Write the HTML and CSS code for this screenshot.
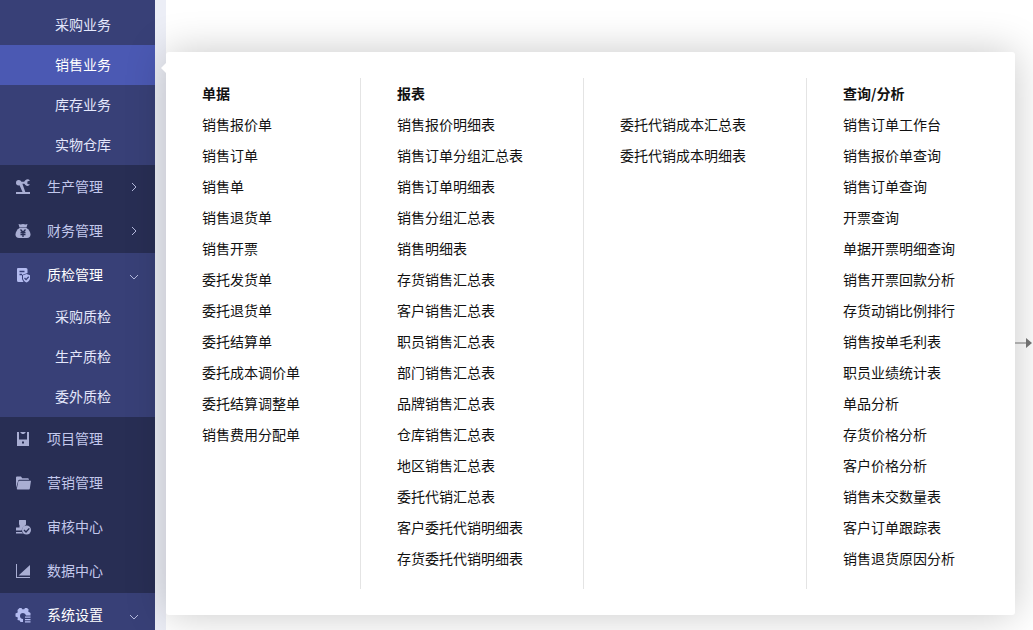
FILE: index.html
```html
<!DOCTYPE html>
<html lang="zh-CN">
<head>
<meta charset="utf-8">
<meta name="viewport" content="width=device-width, initial-scale=1">
<title>销售业务</title>
<link rel="stylesheet" href="styles.css">
</head>
<body>
<div class="app">
  <nav class="sidebar" aria-label="主导航">
    <div class="submenu submenu-top">
      <a class="sub-item" href="#">采购业务</a>
      <a class="sub-item active" href="#">销售业务</a>
      <a class="sub-item" href="#">库存业务</a>
      <a class="sub-item" href="#">实物仓库</a>
    </div>
    <button class="item" type="button">
      <svg class="icon" viewBox="0 0 16 16"><path d="M1 13h14v2H1z"/><circle cx="3.700" cy="3.700" r="2.700"/><path d="M4 2.700h6.500v2H7.400l3 8.500H7.600L4 5z"/><path d="M15 1.600A3.200 3.200 0 1 0 15 5.600l-2.600-.7V2.400z"/></svg>
      <span class="label">生产管理</span>
      <svg class="chevron" viewBox="0 0 10 10"><path d="M3 1l4 4-4 4"/></svg>
    </button>
    <button class="item" type="button">
      <svg class="icon" viewBox="0 0 16 16"><path d="M3.500 1l2 .5L8 1l2.500.5 2-.5-1 3.500h-7z"/><path d="M4.500 5h7C14 6.500 15.500 9 15.500 11.500c0 2.300-1.200 3.500-3.500 3.500H4C1.700 15 .5 13.800.5 11.500.5 9 2 6.500 4.500 5z"/><path class="cut" d="M5.500 6.500L8 9.200l2.500-2.700M5.500 9.500h5M5.500 11.500h5M8 9v5"/></svg>
      <span class="label">财务管理</span>
      <svg class="chevron" viewBox="0 0 10 10"><path d="M3 1l4 4-4 4"/></svg>
    </button>
    <div class="group">
      <button class="item" type="button">
        <svg class="icon" viewBox="0 0 16 16"><path d="M3 1h8q1.500 0 1.500 1.500V6L7 8v4l1.500 3H3.500q-1.500 0-1.500-1.500V2q0-1 1-1z"/><path class="cut" d="M4.500 4.500h5M4.500 7.500H7"/><path d="M11.500 7l3.500 1.300v3c0 2-1.500 3.300-3.500 4.200-2-.9-3.500-2.200-3.500-4.200v-3z"/><path class="cut" d="M9.500 11l1.600 1.600 2.600-2.800"/></svg>
        <span class="label">质检管理</span>
        <svg class="chevron low" viewBox="0 0 10 10"><path d="M1 3l4 4 4-4"/></svg>
      </button>
      <div class="submenu">
        <a class="sub-item" href="#">采购质检</a>
        <a class="sub-item" href="#">生产质检</a>
        <a class="sub-item" href="#">委外质检</a>
      </div>
    </div>
    <button class="item" type="button">
      <svg class="icon" viewBox="0 0 16 16"><path fill-rule="evenodd" d="M2 1h2v7.500h8V1h2v14H2zM7 10.500v2h2v-2z"/><path d="M5.500 1h5v1h-1v1h-3V2h-1z"/></svg>
      <span class="label">项目管理</span>
    </button>
    <button class="item" type="button">
      <svg class="icon" viewBox="0 0 16 16"><path d="M1 13V2.500Q1 1.500 2 1.500h4l1.200 1.700H13Q14 3.200 14 4.700H4.500q-1 0-1.300 1z"/><path d="M4.500 5.700H16l-1.200 8q-.1.800-.8.800H2.500q-.8 0-.7-.7l1.500-7.200q.2-.9 1.200-.9z"/></svg>
      <span class="label">营销管理</span>
    </button>
    <button class="item" type="button">
      <svg class="icon" viewBox="0 0 16 16"><path d="M4 1.500Q4 1 4.500 1h6q.5 0 .5.500v4L9.500 7Q7 8.500 6.500 11.500H1V8.500h3.500V6L4 5.500zM1 13h6l1 1.500H1z"/><circle cx="11.500" cy="11" r="4.500"/><path class="cut" d="M9 11l2 2 3.300-3.600"/></svg>
      <span class="label">审核中心</span>
    </button>
    <button class="item" type="button">
      <svg class="icon" viewBox="0 0 16 16"><path d="M1 1h1v13h13v1H1zM15 2v10.500H3.500z"/></svg>
      <span class="label">数据中心</span>
    </button>
    <div class="group">
      <button class="item" type="button">
        <svg class="icon" viewBox="0 0 16 16"><path d="M4.500 1h2l.7 1.300h2L10 1h2l1.700 1.500-.5 2 2.300 1.500v2.500H11Q10.500 6 8 6 5 6 5 9q0 2.500 3 3v3H5.500L4.700 13.500 2.500 13l.3-2.500L.5 9.500V6.500L2.700 5.500 2.500 3z"/><path d="M10 9.500h5.500v1.200H10zM10 12h5.500v1.200H10zM10 14.300h5.500v1.200H10z"/></svg>
        <span class="label">系统设置</span>
        <svg class="chevron low" viewBox="0 0 10 10"><path d="M1 3l4 4 4-4"/></svg>
      </button>
    </div>
  </nav>

  <main class="content">
    <section class="panel" aria-label="销售业务">
      <div class="column">
        <h3>单据</h3>
        <a href="#">销售报价单</a>
        <a href="#">销售订单</a>
        <a href="#">销售单</a>
        <a href="#">销售退货单</a>
        <a href="#">销售开票</a>
        <a href="#">委托发货单</a>
        <a href="#">委托退货单</a>
        <a href="#">委托结算单</a>
        <a href="#">委托成本调价单</a>
        <a href="#">委托结算调整单</a>
        <a href="#">销售费用分配单</a>
      </div>
      <div class="column">
        <h3>报表</h3>
        <a href="#">销售报价明细表</a>
        <a href="#">销售订单分组汇总表</a>
        <a href="#">销售订单明细表</a>
        <a href="#">销售分组汇总表</a>
        <a href="#">销售明细表</a>
        <a href="#">存货销售汇总表</a>
        <a href="#">客户销售汇总表</a>
        <a href="#">职员销售汇总表</a>
        <a href="#">部门销售汇总表</a>
        <a href="#">品牌销售汇总表</a>
        <a href="#">仓库销售汇总表</a>
        <a href="#">地区销售汇总表</a>
        <a href="#">委托代销汇总表</a>
        <a href="#">客户委托代销明细表</a>
        <a href="#">存货委托代销明细表</a>
      </div>
      <div class="column continued">
        <a href="#">委托代销成本汇总表</a>
        <a href="#">委托代销成本明细表</a>
      </div>
      <div class="column">
        <h3>查询/分析</h3>
        <a href="#">销售订单工作台</a>
        <a href="#">销售报价单查询</a>
        <a href="#">销售订单查询</a>
        <a href="#">开票查询</a>
        <a href="#">单据开票明细查询</a>
        <a href="#">销售开票回款分析</a>
        <a href="#">存货动销比例排行</a>
        <a href="#">销售按单毛利表</a>
        <a href="#">职员业绩统计表</a>
        <a href="#">单品分析</a>
        <a href="#">存货价格分析</a>
        <a href="#">客户价格分析</a>
        <a href="#">销售未交数量表</a>
        <a href="#">客户订单跟踪表</a>
        <a href="#">销售退货原因分析</a>
      </div>
      <svg class="flow-arrow" viewBox="0 0 17 10"><path d="M0 4.500h12v1H0zM11 0l6 5-6 5z"/></svg>
    </section>
  </main>
</div>
</body>
</html>
```
FILE: styles.css
```css
* {
  box-sizing: border-box;
}

body {
  margin: 0;
  background: #fff;
  color: #111;
  font: 14px/20px "Noto Sans CJK SC", sans-serif;
}

a {
  color: inherit;
  text-decoration: none;
}

.app {
  display: flex;
  height: 100vh;
  min-height: 630px;
  overflow: hidden;
}

.sidebar {
  flex: none;
  width: 155px;
  overflow: hidden;
  background: #282e54;
  color: #c3c8ec;
}

.group,
.submenu {
  background: #384077;
  color: #e4e7fb;
}

.submenu-top {
  padding-top: 5px;
}

.sub-item {
  display: flex;
  align-items: center;
  height: 40px;
  padding: 0 0 2px 55px;
}

.sub-item.active {
  background: #4b59b3;
  color: #fff;
}

.item {
  display: flex;
  align-items: center;
  width: 100%;
  height: 44px;
  padding: 0 16px 0 15px;
  border: 0;
  background: none;
  color: inherit;
  font: inherit;
  text-align: left;
}

.label {
  flex: 1;
  margin-left: 16px;
  padding-bottom: 2px;
}

.group .label {
  color: #fff;
}

.icon {
  width: 16px;
  height: 16px;
  fill: #a9aed3;
}

.group .icon {
  fill: #b3bbf0;
}

.icon .cut {
  fill: none;
  stroke: #282e54;
  stroke-width: 1.3;
}

.group .cut {
  stroke: #384077;
}

.chevron {
  width: 10px;
  height: 10px;
  fill: none;
  stroke: #b4b9dc;
}

.chevron.low {
  margin-top: 4px;
}

.content {
  display: flex;
  flex: 1;
  padding: 52px 18px 15px 11px;
  background: linear-gradient(to right, #eceef6 11px, #fff 11px);
}

.panel {
  position: relative;
  display: grid;
  flex: 1;
  grid-template-columns: 195fr 223fr 223fr 208fr;
  padding: 26px 0;
  border-radius: 3px;
  background: #fff;
  box-shadow: 0 0 40px rgba(0, 0, 0, 0.22);
}

.panel::before {
  position: absolute;
  top: 11px;
  left: -5px;
  border: 5px solid transparent;
  border-right-color: #fff;
  border-left: 0;
  content: "";
}

.column {
  padding-left: 36px;
  border-right: 1px solid #e4e4e4;
}

.column:nth-child(4) {
  border-right: 0;
}

.column.continued {
  padding-top: 31px;
}

.column h3,
.column a {
  display: block;
  margin: 0;
  font-size: 14px;
  line-height: 31px;
  white-space: nowrap;
}

.flow-arrow {
  position: absolute;
  top: 286px;
  left: 100%;
  width: 17px;
  height: 10px;
  fill: #707070;
}
```
